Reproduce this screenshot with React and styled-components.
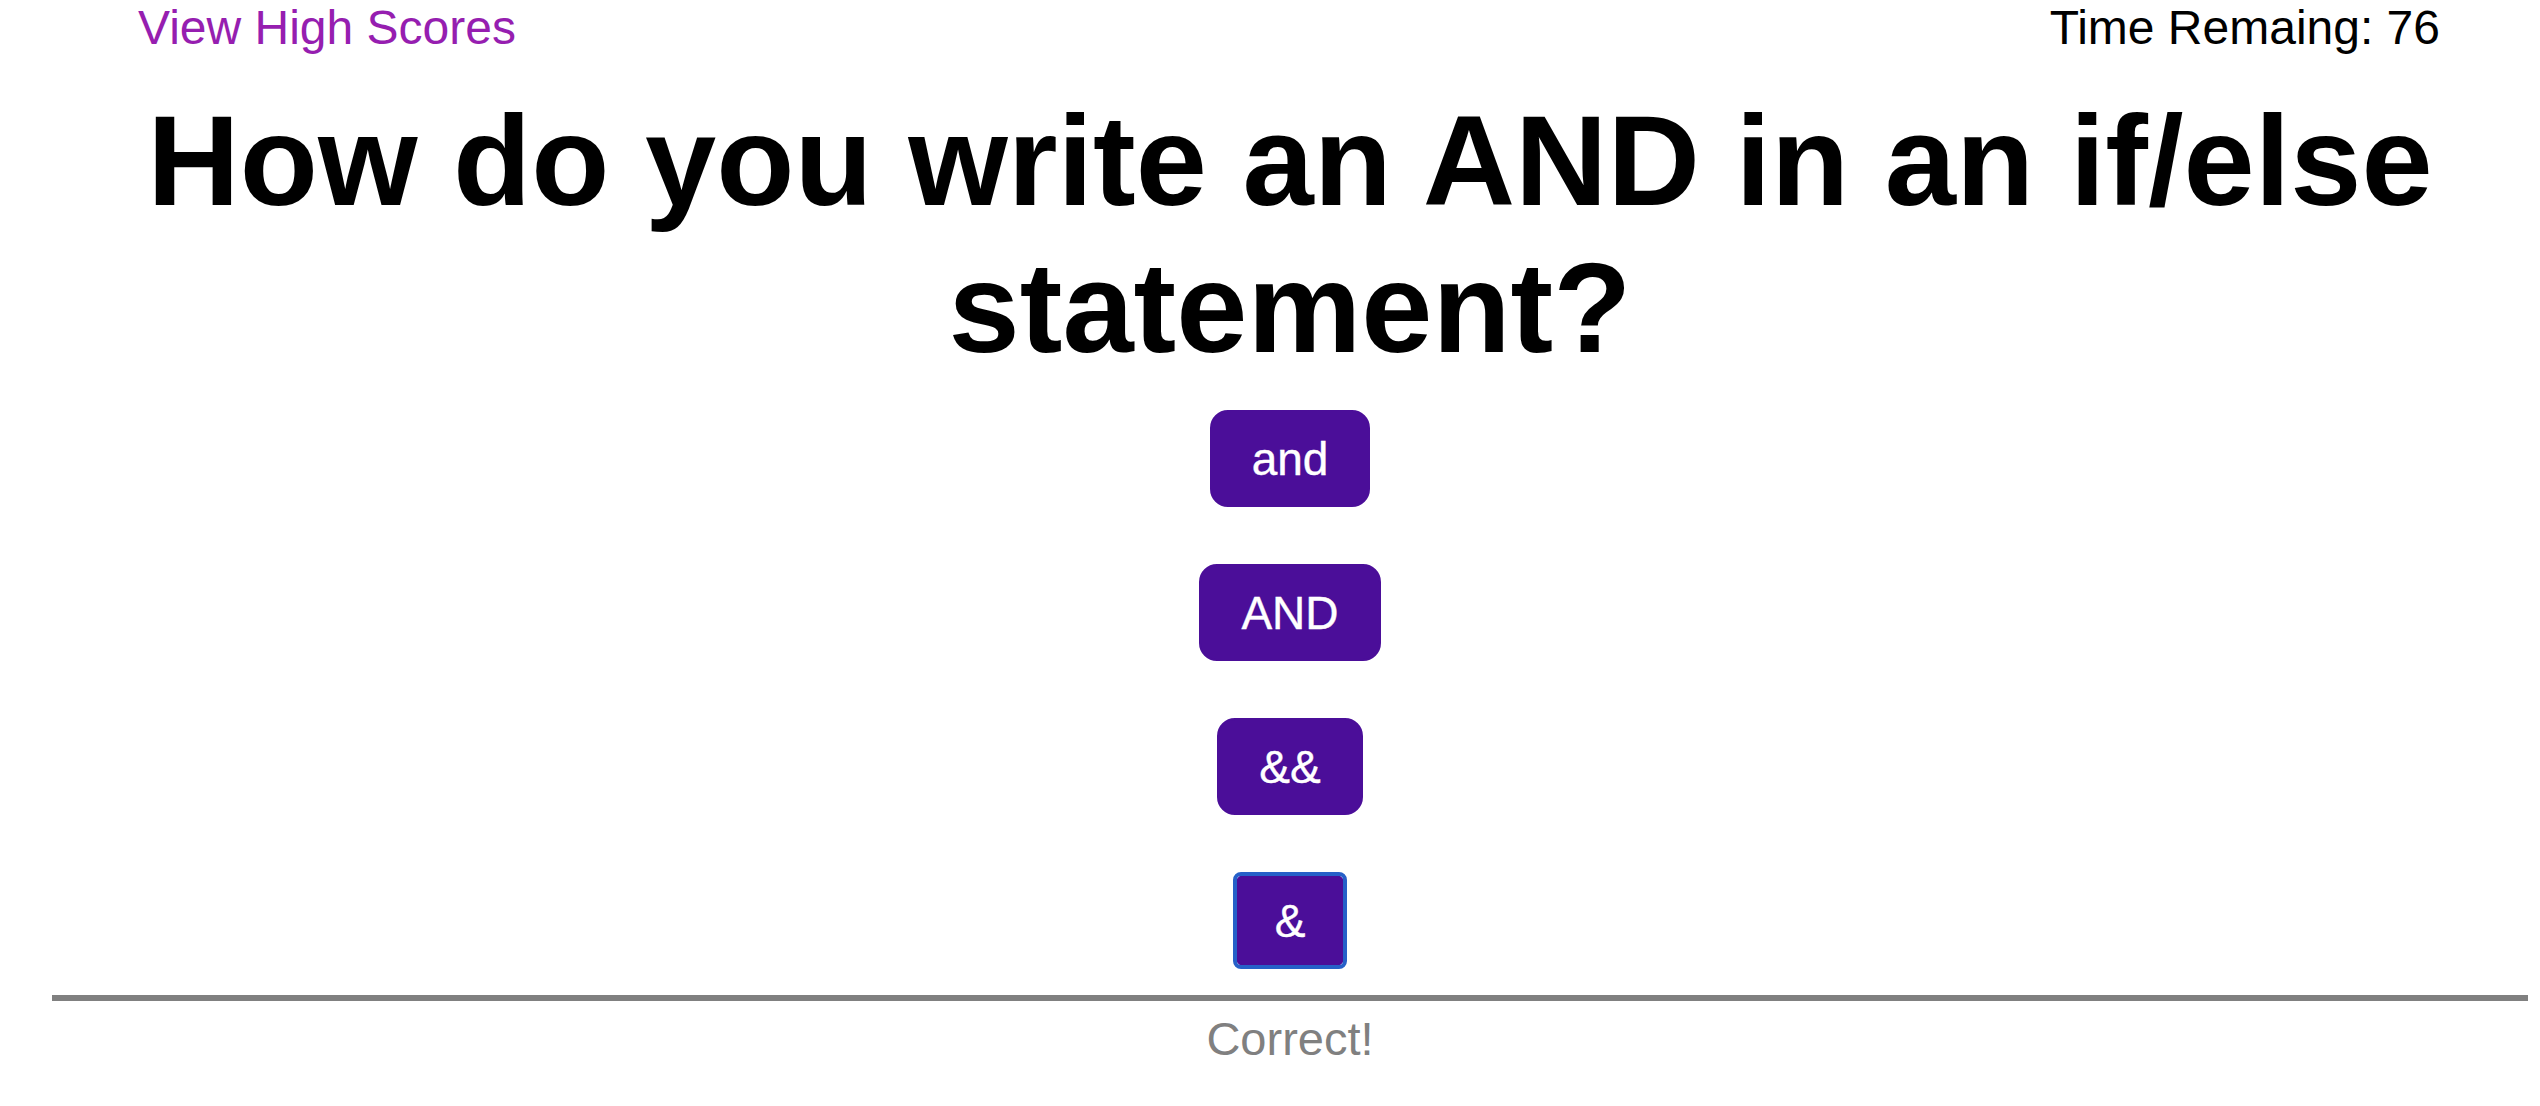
import React from 'react'
import styled, { createGlobalStyle } from 'styled-components'

const GlobalStyle = createGlobalStyle`
    body {
        margin: 0;
        background: #fff;
        font-family: "Liberation Sans", Arial, sans-serif;
    }
`

const answers = ['and', 'AND', '&&', '&']

const App = () => {
    return (
        <>
            <GlobalStyle />
            <Page>
                <Header>
                    <ScoresLink>View High Scores</ScoresLink>
                    <Timer>Time Remaing: 76</Timer>
                </Header>
                <Question>How do you write an AND in an if/else statement?</Question>
                <Answers>
                    {answers.map((a, i) => (
                        <AnswerButton key={a} $focused={i === answers.length - 1}>{a}</AnswerButton>
                    ))}
                </Answers>
                <Divider />
                <Result>Correct!</Result>
            </Page>
        </>
    )
}

export default App


const Page = styled.main`
    margin: 0 12px 0 52px;
    display: flex;
    flex-direction: column;
    align-items: center;
`

const Header = styled.header`
    align-self: stretch;
    display: flex;
    justify-content: space-between;
    padding: 0 88px 0 86px;
    font-size: 48px;
    line-height: normal;
`

const ScoresLink = styled.a`
    color: #961eb0;
    cursor: pointer;
    text-decoration: none;
`

const Timer = styled.span`
    color: #000;
`

const Question = styled.h1`
    margin: 32px 0 29px;
    font-size: 128px;
    font-weight: 700;
    line-height: normal;
    text-align: center;
    color: #000;
`

const Answers = styled.div`
    display: flex;
    flex-direction: column;
    align-items: center;
    gap: 57px;
`

const AnswerButton = styled.button`
    position: relative;
    font-family: "Liberation Sans", Arial, sans-serif;
    font-size: 46px;
    line-height: normal;
    color: #fff;
    -webkit-text-stroke: 0.4px #fff;
    background: #4b0e99;
    border: 2px solid #4b0e99;
    border-radius: 18px;
    padding: 19.5px 40px;
    cursor: pointer;
    outline: none;

    &::after {
        content: "";
        display: ${p => (p.$focused ? 'block' : 'none')};
        position: absolute;
        inset: -2px;
        border: 4px solid #2660c8;
        border-radius: 8px;
    }
`

const Divider = styled.hr`
    align-self: stretch;
    margin: 26px 0 0;
    height: 6px;
    border: none;
    background: #808080;
`

const Result = styled.p`
    margin: 10px 0 0;
    font-size: 47px;
    line-height: normal;
    color: #808080;
`
